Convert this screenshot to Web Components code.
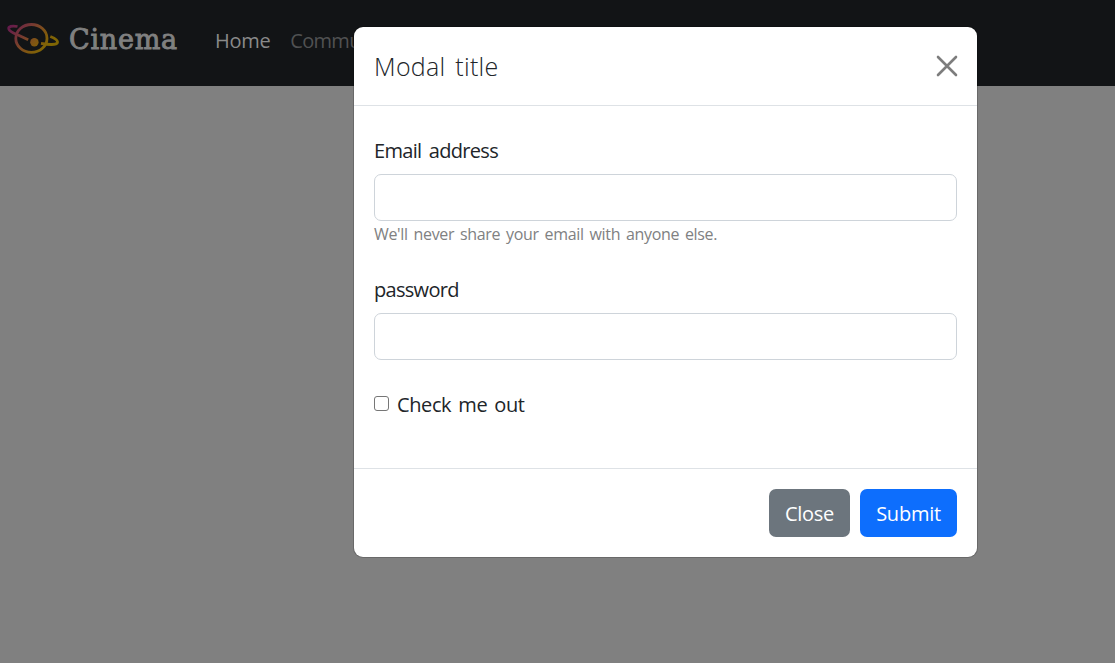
<!DOCTYPE html>
<html lang="en">
<head>
<meta charset="utf-8">
<title>Cinema</title>
<style>
html,body{margin:0;height:100%;overflow:hidden;background:#fff}
body{font-family:"Open Sans","Noto Sans",sans-serif;font-size:20px;line-height:30px;color:#212529}
</style>
</head>
<body>
<cinema-app></cinema-app>
<script>
function define(name, html) {
  const t = document.createElement('template');
  t.innerHTML = html;
  customElements.define(name, class extends HTMLElement {
    constructor() {
      super();
      this.attachShadow({ mode: 'open' }).append(t.content.cloneNode(true));
    }
  });
}

define('planet-logo', `
<style>:host{display:block;width:54px;height:36px}svg{display:block}</style>
<svg width="54" height="36" viewBox="6 21 54 36" fill="none" stroke="url(#g)" stroke-width="2.800">
  <defs><linearGradient id="g" gradientUnits="userSpaceOnUse" x1="10" y1="26" x2="40" y2="54">
    <stop offset="0" stop-color="#661b4c"/><stop offset=".2" stop-color="#6f2b3f"/><stop offset=".5" stop-color="#7b4428"/><stop offset=".75" stop-color="#80580f"/><stop offset="1" stop-color="#806604"/>
  </linearGradient></defs>
  <ellipse cx="31.400" cy="38.400" rx="15.600" ry="13.900"/>
  <path d="M17.500 26.500C12 25.400 8.200 26.300 8.800 29c.6 2.400 4 3.900 8.200 5.500L28.200 39.800"/>
  <path d="M50.300 36.500c4.200 1.700 7.800 3.800 7.200 6-.8 2.600-9.200 2.200-16.500.8"/>
  <circle cx="34.400" cy="42.200" r="4.200" fill="url(#g)" stroke="none"/>
</svg>`);

define('nav-brand', `
<style>
:host{display:flex;align-items:center;gap:9px;width:171px}
b{font:400 27px/34px "DejaVu Serif","Liberation Serif",serif;color:#808080;-webkit-text-stroke:.9px #808080;letter-spacing:.75px;padding-top:2px;white-space:nowrap}
</style>
<planet-logo></planet-logo><b><slot></slot></b>`);

define('nav-item', `
<style>:host{display:block;color:#505152;white-space:nowrap}:host([active]){color:#898a8a}</style><slot></slot>`);

define('top-bar', `
<style>
:host{display:flex;box-sizing:border-box;height:86px;padding:0 0 8px 6px;align-items:center;background:#121416}
nav{display:flex;gap:20px;margin-left:38px;padding-top:3px}
</style>
<nav-brand>Cinema</nav-brand>
<nav><nav-item active style="letter-spacing:-.3px">Home</nav-item><nav-item style="letter-spacing:-.7px">Community</nav-item></nav>`);

define('modal-dialog', `
<style>
:host{display:flex;flex-direction:column;box-sizing:border-box;width:623px;height:530px;background:#fff;border-radius:9px;box-shadow:0 0 0 1px rgba(0,0,0,.18)}
header{display:flex;align-items:center;justify-content:space-between;box-sizing:border-box;height:79px;padding:0 19px 0 20px;border-bottom:1px solid #dee2e6}
h5{margin:0;font-size:25px;line-height:38px;font-weight:350;word-spacing:3px;letter-spacing:.3px}
svg{display:block}
main{flex:1;padding:30px 20px 0}
footer{display:flex;justify-content:flex-end;gap:10px;box-sizing:border-box;height:89px;padding:20px 20px 0;border-top:1px solid #dee2e6}
</style>
<header><h5><slot name="title"></slot></h5>
<svg width="22" height="22" viewBox="0 0 22 22" stroke="#7d7d7d" stroke-width="2.600" stroke-linecap="round"><path d="M2 2l18 18M20 2L2 20"/></svg></header>
<main><slot></slot></main>
<footer><slot name="footer"></slot></footer>`);

define('form-field', `
<style>
:host{display:block}
label{display:block;height:30px;margin-bottom:8px;letter-spacing:-.7px;word-spacing:3px}
input{display:block;box-sizing:border-box;width:100%;height:47px;border:1px solid #ced4da;border-radius:7px;background:#fff;outline:0}
</style>
<label><slot></slot></label><input>
<slot name="help"></slot>`);

define('help-text', `
<style>:host{display:block;color:#808182;font-size:16px;line-height:24px;padding-top:1px;letter-spacing:-.33px;word-spacing:2px;white-space:nowrap}</style><slot></slot>`);

define('check-field', `
<style>
:host{display:flex;align-items:center;height:30px;gap:8px;letter-spacing:-.4px;word-spacing:2.300px}
i{box-sizing:border-box;width:15px;height:15px;border:1px solid #767676;border-radius:3px;margin:-3px 0 0 0}
</style>
<i></i><span><slot></slot></span>`);

define('push-button', `
<style>
:host{display:flex;align-items:center;justify-content:center;box-sizing:border-box;width:81px;height:48px;padding-top:2px;border-radius:7px;background:#6c757d;color:#fff;letter-spacing:-.25px;white-space:nowrap}
:host([primary]){width:97px;background:#0d6efd}
</style><slot></slot>`);

define('cinema-app', `
<style>
:host{display:block;position:relative;height:663px;background:#808080}
modal-dialog{position:absolute;left:354px;top:27px}
</style>
<top-bar></top-bar>
<modal-dialog>
  <span slot="title">Modal title</span>
  <form-field><span>Email address</span><help-text slot="help">We'll never share your email with anyone else.</help-text></form-field>
  <form-field style="margin-top:29px"><span>password</span></form-field>
  <check-field style="margin-top:30px">Check me out</check-field>
  <push-button slot="footer">Close</push-button>
  <push-button slot="footer" primary>Submit</push-button>
</modal-dialog>`);
</script>
</body>
</html>
